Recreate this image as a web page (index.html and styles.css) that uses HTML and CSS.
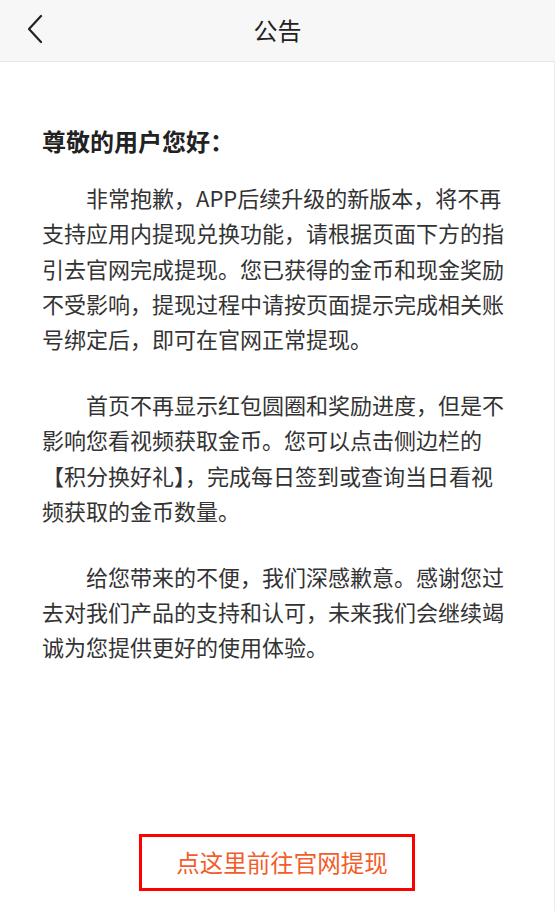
FILE: index.html
```html
<!DOCTYPE html>
<html lang="zh-CN">
<head>
<meta charset="utf-8">
<title>公告</title>
<link rel="stylesheet" href="styles.css">
</head>
<body>
<div class="page">
  <header class="topbar">
    <span class="back" aria-label="返回">
      <svg width="16" height="30" viewBox="0 0 16 30"><polyline points="13,2 1,15 13,28" fill="none" stroke="#222" stroke-width="2.2" stroke-linecap="round" stroke-linejoin="round"/></svg>
    </span>
    <h1 class="title">公告</h1>
  </header>
  <main class="content">
    <h2 class="greet">尊敬的用户您好：</h2>
    <p class="para">非常抱歉，APP后续升级的新版本，将不再支持应用内提现兑换功能，请根据页面下方的指引去官网完成提现。您已获得的金币和现金奖励不受影响，提现过程中请按页面提示完成相关账号绑定后，即可在官网正常提现。</p>
    <p class="para">首页不再显示红包圆圈和奖励进度，但是不影响您看视频获取金币。您可以点击侧边栏的【积分换好礼】，完成每日签到或查询当日看视频获取的金币数量。</p>
    <p class="para">给您带来的不便，我们深感歉意。感谢您过去对我们产品的支持和认可，未来我们会继续竭诚为您提供更好的使用体验。</p>
    <div class="action">
      <a class="link">点这里前往官网提现</a>
    </div>
  </main>
</div>
</body>
</html>
```
FILE: styles.css
```css
html, body {
  margin: 0;
  padding: 0;
  background: #ffffff;
}
body {
  font-family: "Noto Sans CJK SC", "Noto Sans", sans-serif;
  color: #333333;
}
.page {
  width: 555px;
  min-height: 911px;
  display: flex;
  flex-direction: column;
}
.topbar {
  height: 61px;
  background: #f7f7f7;
  border-bottom: 1px solid #e6e6e6;
  display: flex;
  align-items: center;
  justify-content: center;
  position: relative;
  flex-shrink: 0;
}
.back {
  position: absolute;
  left: 28px;
  top: 14px;
  width: 16px;
  height: 30px;
  display: block;
}
.back svg { display: block; }
.title {
  margin: 0;
  font-size: 24px;
  font-weight: 400;
  color: #222222;
  line-height: 32px;
  margin-top: -2px;
}
.content {
  flex: 1;
  display: flex;
  flex-direction: column;
  padding: 63px 42px 20px 42px;
  border-right: 1px solid #ececec;
}
.greet {
  margin: 0 0 23px 0;
  font-size: 24px;
  font-weight: 700;
  line-height: 32px;
  color: #222222;
}
.para {
  margin: 0 0 30.75px 0;
  font-size: 22px;
  line-height: 35.25px;
  text-indent: 2em;
  color: #333333;
}
.action {
  margin-top: auto;
  display: flex;
  justify-content: center;
}
.link {
  display: block;
  border: 3px solid #ff0000;
  padding: 0 24px 0 34px;
  line-height: 51px;
  font-size: 23.5px;
  color: #f25d2b;
  text-decoration: none;
}
```
